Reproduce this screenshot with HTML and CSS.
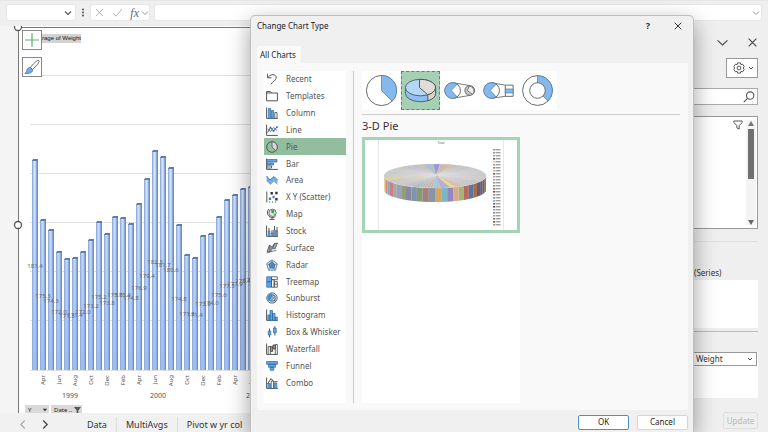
FILE: index.html
```html
<!DOCTYPE html>
<html lang="en">
<head>
<meta charset="utf-8">
<title>Change Chart Type</title>
<link rel="stylesheet" href="styles.css">
</head>
<body>
<div class="app">
  <header class="formula-bar">
    <div class="name-box">
      <input class="bare-input" type="text" aria-label="Name box">
      <svg class="chev" viewBox="0 0 8 8"><path d="M1 2.5 4 5.5 7 2.5"/></svg>
    </div>
    <svg class="dots" viewBox="0 0 4 10"><circle cx="2" cy="2" r=".9"/><circle cx="2" cy="5" r=".9"/><circle cx="2" cy="8" r=".9"/></svg>
    <div class="fx-group">
      <button class="plain" aria-label="Cancel entry"><svg class="fx-icon" viewBox="0 0 10 10"><path d="M1 1 9 9M9 1 1 9"/></svg></button>
      <button class="plain" aria-label="Enter"><svg class="fx-icon" viewBox="0 0 10 10"><path d="M0 6 3.500 9 10 1"/></svg></button>
      <button class="plain fx" aria-label="Insert function">fx<svg class="chev light" viewBox="0 0 8 8"><path d="M1 2.500 4 5.500 7 2.500"/></svg></button>
    </div>
    <div class="formula-box">
      <input class="bare-input" type="text" aria-label="Formula">
      <svg class="chev light" viewBox="0 0 8 8"><path d="M1 2.500 4 5.500 7 2.500"/></svg>
    </div>
  </header>

  <main class="workspace">
    <div class="book">
      <section class="sheet">
        <svg id="chart" class="chart" role="img" aria-label="Average of Weight by month">
          <defs>
            <linearGradient id="barAcross"><stop offset="0" stop-color="#7d9fd2"/><stop offset=".22" stop-color="#b4cbf0"/><stop offset=".45" stop-color="#dceafc"/><stop offset=".68" stop-color="#a6c1eb"/><stop offset=".82" stop-color="#6f91c6"/><stop offset="1" stop-color="#6c8bbd"/></linearGradient>
            <linearGradient id="barDown" gradientUnits="userSpaceOnUse" x1="0" y1="150" x2="0" y2="343"><stop offset="0" stop-color="#8fb0f2" stop-opacity="0"/><stop offset="1" stop-color="#8fb0f2" stop-opacity=".7"/></linearGradient>
          </defs>
        </svg>
        <div class="chart-tools">
          <button class="tool" aria-label="Chart elements"><svg viewBox="0 0 18 18"><path d="M9 2V16M2 9H16" stroke="#5bb377" stroke-width="1.200"/></svg></button>
          <button class="tool" aria-label="Chart styles"><svg viewBox="0 0 18 18"><path d="M7.500 9.500C10 6 13.500 2.500 15.500 2.300 17 2.500 15.500 5 14.500 6.300L9.500 11.500Z" fill="#fff" stroke="#555" stroke-width=".9"/><path d="M7.300 9.500 9.600 11.700C9.500 14.500 7 15.800 1.800 15.500 3.600 14.500 3.500 13 4.200 11.200 5 9.900 6.200 9.300 7.300 9.500Z" fill="#74aee6" stroke="#2f6fb5" stroke-width=".8"/></svg></button>
        </div>
        <span class="field-tag">rage of Weight</span>
        <div class="axis-fields">
          <button class="axis-field">Y<svg viewBox="0 0 8 8"><path d="M2 3H7L4.500 6Z" fill="#333"/></svg></button>
          <button class="axis-field">Date ..<svg viewBox="0 0 8 8"><path d="M0 1H8L5 5V8H3V5Z" fill="#555"/></svg></button>
        </div>
      </section>

      <footer class="tabs">
        <button class="plain nav prev" aria-label="Previous sheet"><svg viewBox="0 0 8 8"><path d="M6 .5 2.500 4 6 7.500"/></svg></button>
        <button class="plain nav" aria-label="Next sheet"><svg viewBox="0 0 8 8"><path d="M2 .5 5.500 4 2 7.500"/></svg></button>
        <button class="sheet-tab first">Data</button>
        <button class="sheet-tab">MultiAvgs</button>
        <button class="sheet-tab">Pivot w yr col</button>
      </footer>
    </div>

    <aside class="pane">
      <div class="pane-head">
        <button class="plain" aria-label="Options"><svg class="pane-ico" viewBox="0 0 10 10"><path d="M.5 3 5 7.200 9.500 3"/></svg></button>
        <button class="plain" aria-label="Close pane"><svg class="pane-ico" viewBox="0 0 10 10"><path d="M1.500 1.500 8.500 8.500M8.500 1.500 1.500 8.500"/></svg></button>
      </div>
      <button class="gear" aria-label="Tools">
        <svg class="gear-ico" viewBox="0 0 12 12"><path d="M4.600.9H7.400L7.900 2.600 9.600 2.200 11.200 4.700 10.200 6 11.200 7.300 9.600 9.800 7.900 9.400 7.400 11.100H4.600L4.100 9.400 2.400 9.800.8 7.300 1.800 6 .8 4.700 2.400 2.200 4.100 2.600Z"/><circle cx="6" cy="6" r="1.900"/></svg>
        <svg class="gear-chev" viewBox="0 0 6 6"><path d="M1 2 3 4 5 2"/></svg>
      </button>
      <div class="search">
        <input class="bare-input" type="text" aria-label="Search fields">
        <svg class="search-ico" viewBox="0 0 12 12"><circle cx="7.200" cy="4.600" r="3.700"/><path d="M4.600 7.300.8 11.200"/></svg>
      </div>
      <div class="fields">
        <svg class="funnel" viewBox="0 0 10 10"><path d="M.8 1H9.200V2.500L6.200 5.500V9L3.900 8V5.500L.8 2.500Z"/></svg>
        <div class="scroll"><b class="up"></b><b class="thumb"></b><b class="down"></b></div>
      </div>
      <hr class="pane-rule">
      <div class="area-label">(Series)</div>
      <div class="series"></div>
      <hr class="area-rule">
      <div class="values">
        <div class="pick"><select class="pick-select" aria-label="Value field"><option>Weight</option></select><svg class="pick-chev" viewBox="0 0 6 6"><path d="M1 2 3 4 5 2"/></svg></div>
      </div>
      <button class="update" disabled>Update</button>
    </aside>
  </main>

  <div class="dialog" role="dialog" aria-labelledby="dlg-title">
    <div class="dlg-title">
      <h1 id="dlg-title">Change Chart Type</h1>
      <button class="plain help" aria-label="Help">?</button>
      <button class="plain" aria-label="Close"><svg class="dlg-close" viewBox="0 0 8 8"><path d="M.7.7 7.300 7.300M7.300.7.7 7.300"/></svg></button>
    </div>
    <div class="dlg-tabs"><button class="dlg-tab">All Charts</button></div>
    <div class="dlg-body">
      <nav class="types">
        <button class="type"><svg viewBox="0 0 12 12"><path class="k" d="M1.500.8V4.800H5.500M1.700 4.600C4 1.500 8 .8 9.800 3 11.300 5.500 9 7.200 4.800 11.300"/></svg>Recent</button>
        <button class="type"><svg viewBox="0 0 12 12"><path class="k" d="M.6 10.800V1.500H4.500L5.500 3H11.400V10.800ZM.6 3H5.500"/></svg>Templates</button>
        <button class="type"><svg viewBox="0 0 12 12"><path class="k" d="M.6.5V11.400H11.800"/><path class="b" d="M2.300 1.500H4.600V11.400H2.300ZM5.300 3.500H7.500V11.400H5.300Z"/><path class="w" d="M8.800 5.500H11V11.400H8.800Z"/></svg>Column</button>
        <button class="type"><svg viewBox="0 0 12 12"><path class="k" d="M.6.5V11.400H11.800M1.500 8.500 4.500 3.500 7.500 7 11 3"/><path class="bl" d="M1.500 5 4.500 7.500 7.500 3.500 11 6.500"/><path d="M3.700 2.700h1.600v1.600H3.700ZM6.700 6.200h1.600v1.600H6.700ZM10.200 2.200h1.500v1.600h-1.500Z" fill="#2b5f8f"/></svg>Line</button>
        <button class="type selected" aria-current="true"><svg viewBox="0 0 12 12"><circle class="k" cx="6" cy="6" r="5.300"/><path d="M6 .7A5.300 5.300 0 0 1 9.700 9.800L6 6Z" fill="#d6d6d6" stroke="#555" stroke-width=".8"/></svg>Pie</button>
        <button class="type"><svg viewBox="0 0 12 12"><path class="k" d="M.6.5V11.400H11.800"/><path class="b" d="M.8 1.500H11V4H.8ZM.8 5H7.500V7H.8Z"/><path class="w" d="M.8 8H5.500V10H.8Z"/></svg>Bar</button>
        <button class="type"><svg viewBox="0 0 12 12"><path d="M.6 2 4 6 8 2.500 11.500 6V10L8 7 4.500 10.500.6 7Z" fill="#71aeea"/><path class="bl" d="M.6 2 4 6 8 2.500 11.500 6"/><path d="M.6 7 4.500 10.500 8 7 11.500 10.500" fill="none" stroke="#aaa"/></svg>Area</button>
        <button class="type"><svg viewBox="0 0 12 12"><path class="k" d="M.8.5V11.400"/><path d="M3 11h1.200M6 11h1.200M9 11h1.200" stroke="#555"/><path d="M4.500 1h2.400v2.400h-2.400ZM9.200.8h2.400v2.400h-2.400ZM9.200 7h2.400v2.400h-2.400Z" fill="#333"/><path d="M2.800 6.500h2.400v2.400H2.800ZM6.500 4.800h2.200v2.400H6.500Z" fill="#3b83cb"/></svg>X Y (Scatter)</button>
        <button class="type"><svg viewBox="0 0 12 12"><circle cx="6.500" cy="4.800" r="3.700" fill="#d9ead9" stroke="#555" stroke-width=".8"/><path d="M5 2.500 7.500 1.800 8.500 3.500 7 5.500 5.500 4.800ZM7.500 6 9 5.500 8.500 7.300Z" fill="#3f9c61"/><path class="k" d="M3 1C.6 3 1 7.500 4 9 6 10 8.500 9.500 9.500 8.300M6 9.500V11.300M3.500 11.400H8.500"/></svg>Map</button>
        <button class="type"><svg viewBox="0 0 12 12"><path class="k" d="M.6.5V11.400H11.800M3 3V6M6 5V8M8.500 1V5M11 2V6"/><path class="b" d="M2.200 6H3.800V11.400H2.200ZM7.700 5H9.300V11.400H7.700Z"/><path class="w" d="M5.200 8H6.700V11.400H5.200ZM10.300 6H11.700V11.400H10.300Z"/></svg>Stock</button>
        <button class="type"><svg viewBox="0 0 12 12"><path d="M1 9.500 3.500 3 6 5 8.500 1.500 11.500 1 9 7 6.500 6.500 4 10Z" fill="#aaa" stroke="#444" stroke-width=".7"/><path d="M5 4.500 8 3.500 7 7 4 8Z" fill="#5b9ada"/><path d="M.6 11 5 9.500 10.500 8.500M3.500 3 4 10M8.500 1.500 6.500 6.500" stroke="#555" stroke-width=".8"/></svg>Surface</button>
        <button class="type"><svg viewBox="0 0 12 12"><path d="M6 .8 11.400 4.800 9.400 11.200H2.600L.6 4.800Z" fill="#cfe2f5" stroke="#3f78ad" stroke-width=".8"/><path d="M6 2.800 8.800 5.500 8 9.200 4 8.800 3 5.300Z" fill="#5ca0df" stroke="#444" stroke-width=".7"/><path d="M6 1V6.500L11 4.900M6 6.500 9.200 11M6 6.500 2.800 11M6 6.500 1 4.900" fill="none" stroke="#466a8c" stroke-width=".6"/></svg>Radar</button>
        <button class="type"><svg viewBox="0 0 12 12"><path class="b" d="M.7.800H5.500V5.800H.7ZM.7 5.800H5.500V11.200H.7Z"/><path class="w" d="M5.500.8H11.300V3.700H5.500ZM5.500 3.700H8.200V11.200H5.500ZM8.200 5.500H11.300V11.200H8.200ZM8.200 8.200H11.300"/></svg>Treemap</button>
        <button class="type"><svg viewBox="0 0 12 12"><circle cx="6" cy="6" r="5.200" fill="#cfe2f5" stroke="#555" stroke-width=".8"/><path d="M6 .8A5.200 5.200 0 0 0 2 9.500L6 6Z" fill="#5ca0df"/><circle cx="6" cy="6" r="3.200" fill="none" stroke="#3b7fc4" stroke-width="1.200"/><circle cx="6" cy="6" r="1.300" fill="#fff" stroke="#444" stroke-width=".8"/><path d="M8 8 10 10" stroke="#444" stroke-width=".8"/></svg>Sunburst</button>
        <button class="type"><svg viewBox="0 0 12 12"><path class="k" d="M.6.5V11.400H11.800"/><path class="b" d="M1.800 6H4V11.400H1.800ZM4 1.500H6.500V11.400H4ZM6.500 4.500H9V11.400H6.500ZM9 8H11.300V11.400H9Z"/></svg>Histogram</button>
        <button class="type"><svg viewBox="0 0 12 12"><path class="k" d="M3.500 2.500V11.500M8.800.3V9.500"/><path class="b" d="M2.200 5H4.800V9H2.200ZM7.500 2H10.200V6.800H7.500Z"/></svg>Box &amp; Whisker</button>
        <button class="type"><svg viewBox="0 0 12 12"><path class="k" d="M.6.5V11.400H11.800"/><path class="w" d="M2.200 3.500H4.400V11.400H2.200ZM9.300 1.500H11.300V11.400H9.300Z"/><path d="M4.400 3.500H6.500V8.500H4.400ZM7 2H9.300V6H7Z" fill="#999" stroke="#444" stroke-width=".8"/></svg>Waterfall</button>
        <button class="type"><svg viewBox="0 0 12 12"><path class="b" d="M.6 1.500H11.400V4.300H.6ZM2.500 4.300H9.500V7.300H2.500ZM4.200 7.300H7.800V10.300H4.200Z"/></svg>Funnel</button>
        <button class="type"><svg viewBox="0 0 12 12"><path class="k" d="M.6.5V11.400H11.800"/><path class="b" d="M2 6.500H4.300V11.400H2ZM8.500 6H10.800V11.400H8.500Z"/><path class="w" d="M5.200 4H7.500V11.400H5.200Z"/><path class="k" d="M1.500 7 5 1.500 8 5 11.500 4.500"/></svg>Combo</button>
      </nav>
      <div class="detail">
        <div class="gallery">
          <button class="sub" aria-label="Pie"><svg viewBox="0 0 38 38"><circle class="gw" cx="19" cy="19" r="15.500"/><path class="gb" d="M19 3.500A15.500 15.500 0 0 1 30 30L19 19Z"/></svg></button>
          <button class="sub on" aria-label="3-D Pie"><svg viewBox="0 0 38 38"><path d="M3.500 16V22A15.500 8.500 0 0 0 34.500 22V16Z" fill="#8fc0f0" stroke="#50606d" stroke-width="1"/><path d="M26.500 23V29.500A15.500 8.500 0 0 0 34.500 22V16Z" fill="#d8d5d0" stroke="#555"/><ellipse cx="19" cy="16" rx="15.500" ry="8.500" fill="#b4d7f7" stroke="#50606d"/><path d="M18 7.500A15.500 8.500 0 0 1 26.500 23.400L18 16Z" fill="#e0ddd8" stroke="#555"/></svg></button>
          <button class="sub" aria-label="Pie of Pie"><svg viewBox="0 0 38 38"><path d="M13 11.200 30 14M13 26.800 30 24" stroke="#777"/><circle class="gw" cx="12" cy="19" r="8"/><path class="gb" d="M16.500 12.500A8 8 0 1 0 16.500 25.500L10.500 19Z"/><circle cx="29.500" cy="19" r="5" fill="#c9c9c9" stroke="#666"/><path d="M29 14.500 27 19 32.500 23A5 5 0 0 0 29 14.500Z" fill="#eee" stroke="#666" stroke-width=".9"/></svg></button>
          <button class="sub" aria-label="Bar of Pie"><svg viewBox="0 0 38 38"><path d="M13 11.200 26 13.500M13 26.800 26 25" stroke="#777"/><circle class="gw" cx="12" cy="19" r="8"/><path class="gb" d="M16.500 12.500A8 8 0 1 0 16.500 25.500L10.500 19Z"/><path class="gw" d="M26 13.500H34V25H26Z"/><path class="gb" d="M26 17.500H34V21.500H26Z"/></svg></button>
          <button class="sub" aria-label="Doughnut"><svg viewBox="0 0 38 38"><circle class="gw" cx="19" cy="19" r="15.300"/><path class="gb" d="M19 3.700A15.300 15.300 0 0 1 29.800 29.800L24.700 24.700 19 19Z"/><circle class="gw" cx="19" cy="19" r="8"/></svg></button>
        </div>
        <h2 class="sub-title">3-D Pie</h2>
        <div class="previews">
          <svg id="preview" class="preview" viewBox="0 0 152 90" role="img" aria-label="3-D Pie preview"></svg>
        </div>
      </div>
    </div>
    <div class="dlg-foot">
      <button class="btn primary">OK</button>
      <button class="btn">Cancel</button>
    </div>
  </div>
</div>
<script src="script.js"></script>
</body>
</html>
```

FILE: styles.css
```css
* { box-sizing: border-box; }
html, body { height: 100%; margin: 0; }
body { font-family: "Noto Sans", "Open Sans", sans-serif; font-size: 8px; line-height: 12px; color: #333; background: #efefef; overflow: hidden; }
button, input, select { font: inherit; color: inherit; margin: 0; padding: 0; border: 0; background: none; outline: none; }
svg { display: block; fill: none; flex: none; }

.app { position: relative; height: 100%; display: flex; flex-direction: column; }
.plain { display: flex; align-items: center; justify-content: center; }
.bare-input { flex: 1; min-width: 0; width: 100%; }

.formula-bar { display: flex; align-items: flex-start; gap: 4px; height: 26px; padding: 3px 6px 0; background: #efefef; border-top: 1px solid #e6e6e6; flex: none; }
.name-box, .fx-group, .formula-box { display: flex; align-items: center; height: 17px; background: #fff; border: 1px solid #e6e6e6; border-radius: 3px; }
.name-box { width: 70px; padding-right: 3px; }
.formula-box { flex: 1; padding-right: 1px; }
.fx-group { width: 60px; padding: 0 0 0 4px; justify-content: space-between; }
.chev { width: 8px; height: 8px; stroke: #555; stroke-width: 1.2; }
.chev.light { stroke: #999; stroke-width: 1; }
.dots { width: 4px; height: 17px; margin: 0 1px; fill: #444; }
.fx-icon { width: 9px; height: 9px; stroke: #aaa; stroke-width: 1; }
.fx { gap: 2px; font: italic 12px/14px "Liberation Serif", serif; color: #666; }

.workspace { flex: 1; min-height: 0; display: flex; }
.book { flex: 1; min-width: 0; display: flex; flex-direction: column; background: #f4f4f4; }
.sheet { position: relative; flex: 1; min-height: 0; margin-left: 18px; background: #fff; clip-path: inset(0 0 0 -6px); }
.chart { width: 100%; height: 100%; overflow: visible; }
.chart-tools { position: absolute; left: 4px; top: 4px; display: flex; flex-direction: column; gap: 7px; }
.tool { width: 20px; height: 20px; background: #fff; border: 1px solid #888; }
.tool svg { width: 18px; height: 18px; }
.field-tag { position: absolute; left: 24px; top: 8px; background: #d2d2d2; color: #111; font: 6px/9px "Liberation Sans", sans-serif; }
.axis-fields { position: absolute; left: 7px; bottom: -3px; display: flex; gap: 2px; }
.axis-field { display: flex; align-items: center; justify-content: space-between; width: 24px; height: 11px; padding: 0 1px 2px 3px; background: #d9d9d9; color: #222; font-size: 6px; line-height: 8px; white-space: nowrap; }
.axis-field + .axis-field { width: 31px; }
.axis-field svg { width: 7px; height: 7px; }

.grid { stroke: #e0e0e0; }
.val { font-size: 6px; fill: #666; text-anchor: middle; }
.mon { font-size: 6px; fill: #555; text-anchor: end; }
.yr { font-size: 7px; fill: #555; text-anchor: middle; }

.pane { width: 82px; padding-right: 10px; background: #efefef; display: flex; flex-direction: column; flex: none; }
.pane > * { flex: none; }
.pane-head { display: flex; justify-content: flex-end; align-items: center; gap: 19px; height: 32px; }
.pane-ico { width: 11px; height: 11px; stroke: #444; stroke-width: 1; }
.gear { align-self: flex-end; display: flex; align-items: center; justify-content: space-between; width: 32px; height: 20px; padding: 0 3px 0 6px; background: #fff; border: 1px solid #999; }
.gear-ico { width: 12px; height: 12px; stroke: #555; stroke-width: 1; }
.gear-chev, .pick-chev { width: 6px; height: 6px; stroke: #444; stroke-width: 1; }
.search { display: flex; align-items: center; height: 17px; margin-top: 10px; padding-right: 2px; background: #fff; border: 1px solid #aaa; }
.search-ico { width: 12px; height: 12px; stroke: #555; stroke-width: 1.1; }
.fields { display: flex; justify-content: flex-end; gap: 3px; height: 113px; margin-top: 11px; padding: 3px 1px 3px 0; background: #fff; border: 1px solid #999; }
.funnel { width: 10px; height: 10px; stroke: #555; stroke-width: 1; }
.scroll { display: flex; flex-direction: column; align-items: center; width: 10px; background: #f4f4f4; }
.up, .down { border: 3px solid transparent; }
.up { border-top: 0; border-bottom: 5px solid #777; margin: 1px 0 3px; }
.down { border-bottom: 0; border-top: 5px solid #666; margin-top: auto; }
.thumb { width: 6px; height: 50px; background: #707070; }
.pane-rule { width: 100%; height: 1px; margin: 12px 0 24px; border: 0; background: #e0e0e0; }
.area-label { padding-left: 8px; line-height: 14px; }
.series { height: 48px; background: #fff; }
.area-rule { width: 100%; height: 1px; margin: 3px 0 20px; border: 0; background: #bbb; }
.values { height: 46px; background: #fff; }
.pick { display: flex; align-items: center; height: 14px; margin-right: 1px; padding: 0 3px 0 9px; background: #fff; border: 1px solid #999; }
.pick-select { flex: 1; min-width: 0; appearance: none; line-height: 12px; }
.update { align-self: flex-end; width: 35px; height: 17px; margin-top: 14px; border: 1px solid #dedede; border-radius: 2px; color: #b8b8b8; line-height: 12px; }

.tabs { display: flex; align-items: center; height: 19px; padding: 4px 0 0 17px; background: #f1f1f1; flex: none; font-size: 9px; line-height: 14px; }
.nav { width: 10px; margin-right: 13px; }
.nav svg { width: 9px; height: 9px; stroke: #444; stroke-width: 1.1; }
.nav.prev svg { stroke: #aaa; }
.sheet-tab { height: 15px; padding: 0 9px; white-space: nowrap; border-left: 1px solid #dcdcdc; }
.sheet-tab.first { margin-left: 15px; border-left: 0; }

.dialog { position: absolute; left: 250px; right: 74px; top: 15px; bottom: 0; display: flex; flex-direction: column; padding: 0 5px 0 6px; background: #f0f0f0; border: 1px solid #c0c0c0; border-bottom: 0; border-radius: 5px 5px 0 0; box-shadow: 0 8px 22px rgba(0, 0, 0, .38); }
.dlg-title { display: flex; align-items: center; gap: 24px; height: 20px; padding-right: 6px; flex: none; }
.dlg-title h1 { flex: 1; margin: 0; font-size: 8px; font-weight: 400; line-height: 12px; color: #222; }
.help { font-size: 9px; font-weight: 700; }
.dlg-close { width: 8px; height: 8px; stroke: #333; stroke-width: 1; }
.dlg-tabs { display: flex; align-items: flex-end; height: 27px; flex: none; }
.dlg-tab { height: 17px; padding: 0 5px 0 3px; background: #fafafa; color: #222; }
.dlg-body { flex: 1; min-height: 0; display: flex; padding: 8px 8px 7px 7px; background: #f9f9f9; }
.types { display: flex; flex-direction: column; width: 82px; padding-bottom: 12px; background: #fff; flex: none; }
.type { flex: 1; min-height: 0; display: flex; align-items: center; gap: 8px; padding: 0 0 0 2px; color: #555; text-align: left; white-space: nowrap; }
.type svg { width: 12px; height: 12px; }
.type.selected { background: #92bd9f; }
.detail { flex: 1; min-width: 0; display: flex; flex-direction: column; margin-left: 7px; padding-left: 8px; border-left: 1px solid #ccc; }
.gallery { display: flex; align-self: flex-start; background: #fff; }
.sub { display: flex; align-items: center; justify-content: center; width: 39px; height: 39px; }
.sub svg { width: 37px; height: 37px; }
.sub.on { background: #a5d0b4; border: 1px dashed #777; }
.sub-title { margin: 4px 0 0; padding: 3px 0; border-top: 1px solid #ccc; font-size: 11px; font-weight: 400; line-height: 16px; color: #333; }
.previews { flex: 1; min-height: 0; align-self: flex-start; background: #fff; }
.preview { width: 158px; height: 96px; border: 3px solid #a5d3b5; background: #fff; }
.dlg-foot { display: flex; justify-content: flex-end; align-items: center; gap: 8px; height: 22px; padding-top: 2px; flex: none; }
.btn { width: 51px; height: 15px; background: #fff; border: 1px solid #d5d5d5; border-radius: 2px; color: #222; line-height: 12px; }
.btn.primary { border-color: #4c8fd0; }

.k { stroke: #555; stroke-width: 1; }
.b { fill: #5ea4e6; stroke: #2f6aa5; stroke-width: .7; }
.bl { stroke: #2f7fd0; stroke-width: 1; }
.w { fill: #fff; stroke: #444; stroke-width: .8; }
.gw { fill: #fff; stroke: #666; stroke-width: 1; }
.gb { fill: #86b9eb; stroke: #4a82b8; stroke-width: .8; }
.lg { font-size: 3px; fill: #555; text-anchor: middle; }
```

FILE: script.js
```js
const NS = "http://www.w3.org/2000/svg";
function add(parent, name, attrs, text) {
  const el = document.createElementNS(NS, name);
  for (const key in attrs) el.setAttribute(key, attrs[key]);
  if (text) el.textContent = text;
  parent.appendChild(el);
  return el;
}

// Column chart
const chart = document.getElementById("chart");
const weights = [181.4, 175.3, 174.3, 172.0, 171.3, 171.4, 172.0, 173.2, 175.2, 173.8, 175.6, 175.4, 174.8, 176.9,
  179.4, 182.3, 181.7, 180.6, 174.8, 171.8, 171.4, 173.9, 174.0, 175.6, 177.3, 177.9, 178.4, 178.7];
const tops = [160, 220, 230, 252, 259, 258, 252, 240, 222, 234, 217, 218, 224, 204,
  179, 151, 157, 168, 225, 255, 258, 236, 234, 217, 200, 195, 189, 187];
const originX = 18, originY = 26, base = 370 - originY;

[75, 124, 173, 222, 271, 320, 370].forEach(y =>
  add(chart, "line", { class: "grid", x1: 12, x2: "100%", y1: y - originY + .5, y2: y - originY + .5 }));

tops.forEach((top, i) => {
  const x = 35 + i * 8 - originX, y = top - originY;
  add(chart, "rect", { x: x - 3, y, width: 6, height: base - y, fill: "url(#barAcross)" });
  add(chart, "rect", { x: x - 2, y: y + 2, width: 4, height: base - y - 2, fill: "url(#barDown)" });
  add(chart, "path", { d: `M${x - 3} ${y + 1}L${x - 2} ${y - 1}H${x + 3}V${y + 1}Z`, fill: "#5f7eae" });
});
tops.forEach((top, i) => {
  const x = 35 + i * 8 - originX, y = top - originY;
  add(chart, "text", { class: "val", x, y: (y + base) / 2 + 3 }, weights[i].toFixed(1));
});

["Apr", "Jun", "Aug", "Oct", "Dec", "Feb", "Apr", "Jun", "Aug", "Oct", "Dec", "Feb", "Apr", "Jun"].forEach((m, i) => {
  const x = 45 + i * 16 - originX, y = 375 - originY;
  add(chart, "text", { class: "mon", x, y, transform: `rotate(-90 ${x} ${y})` }, m);
});
[["1999", 70], ["2000", 158], ["2001", 254]].forEach(([t, x]) =>
  add(chart, "text", { class: "yr", x: x - originX, y: 398 - originY }, t));

add(chart, "path", { d: "M0.500 400V1.500H1000", stroke: "#777" });
[1, 199].forEach(cy => add(chart, "circle", { cx: 0, cy, r: 3.5, fill: "#fff", stroke: "#555", "stroke-width": 1.3 }));

// 3-D pie preview
const pie = document.getElementById("preview");
const tones = ["#8f9aa8", "#b9a08e", "#9fb08a", "#a79ac2", "#8fb4bd", "#c79a78", "#7f8fb0", "#b98f8f", "#a0a0a0", "#7ba3a8"];
const side = ["#a9a9ad", "#e3cf7e", "#d9876b", "#7fa9d0", "#c98178", "#a4a8ae", "#9aa3b3", "#8fa079", "#8d86a0", "#7d96ac",
  "#8a9a70", "#a08080", "#8795a8", "#d5a765", "#7bb6c8", "#9486c0", "#d9a98c", "#a4b57c", "#b56a62", "#58779f",
  "#b0683e", "#53647c", "#6b5876", "#5d6f53", "#7d4b48", "#46586d"];
const cx = 70, cy = 36, rx = 51, ry = 12, depth = 14;
add(pie, "path", { d: "M13.500 0V90M138.500 0V90", stroke: "#ddd", "stroke-width": .7 });
add(pie, "text", { class: "lg", x: 76, y: 4 }, "Total");

side.forEach((color, i) => {
  const a = Math.PI - i * Math.PI / side.length, b = Math.PI - (i + 1) * Math.PI / side.length;
  const p = t => [cx + rx * Math.cos(t), cy + ry * Math.sin(t)];
  const [x1, y1] = p(a), [x2, y2] = p(b);
  add(pie, "path", { d: `M${x1} ${y1}L${x2} ${y2}V${y2 + depth}L${x1} ${y1 + depth}Z`, fill: color });
});
add(pie, "ellipse", { cx, cy, rx, ry, fill: "#cfcfcf" });
const slices = 90;
for (let i = 0; i < slices; i++) {
  const a = i * 2 * Math.PI / slices, b = (i + 1) * 2 * Math.PI / slices;
  add(pie, "path", {
    d: `M${cx + 1} ${cy - 1}L${cx + rx * Math.cos(a)} ${cy + ry * Math.sin(a)}L${cx + rx * Math.cos(b)} ${cy + ry * Math.sin(b)}Z`,
    fill: tones[(i * 7) % tones.length], "fill-opacity": .5, stroke: "#e4e4e4", "stroke-width": .3
  });
}
[["#f2e08a", 66], ["#9fc9ea", 84], ["#b6a6e0", 76], ["#f0b9a4", 57], ["#9a8fe0", 268], ["#9fc0e8", 258], ["#e9b98a", 282], ["#f0d67a", 160]].forEach(([fill, deg]) => {
  const a = deg * Math.PI / 180, b = (deg + 7) * Math.PI / 180;
  add(pie, "path", { d: `M${cx + 1} ${cy - 1}L${cx + rx * Math.cos(a)} ${cy + ry * Math.sin(a)}L${cx + rx * Math.cos(b)} ${cy + ry * Math.sin(b)}Z`, fill, "fill-opacity": .8 });
});
for (let i = 0; i < 26; i++) {
  const y = 9 + i * 3;
  add(pie, "rect", { x: 128, y, width: 2, height: 1.6, fill: side[(i * 5 + 7) % side.length] });
  add(pie, "rect", { x: 130.5, y: y + .3, width: 5, height: 1, fill: "#777" });
}
```
